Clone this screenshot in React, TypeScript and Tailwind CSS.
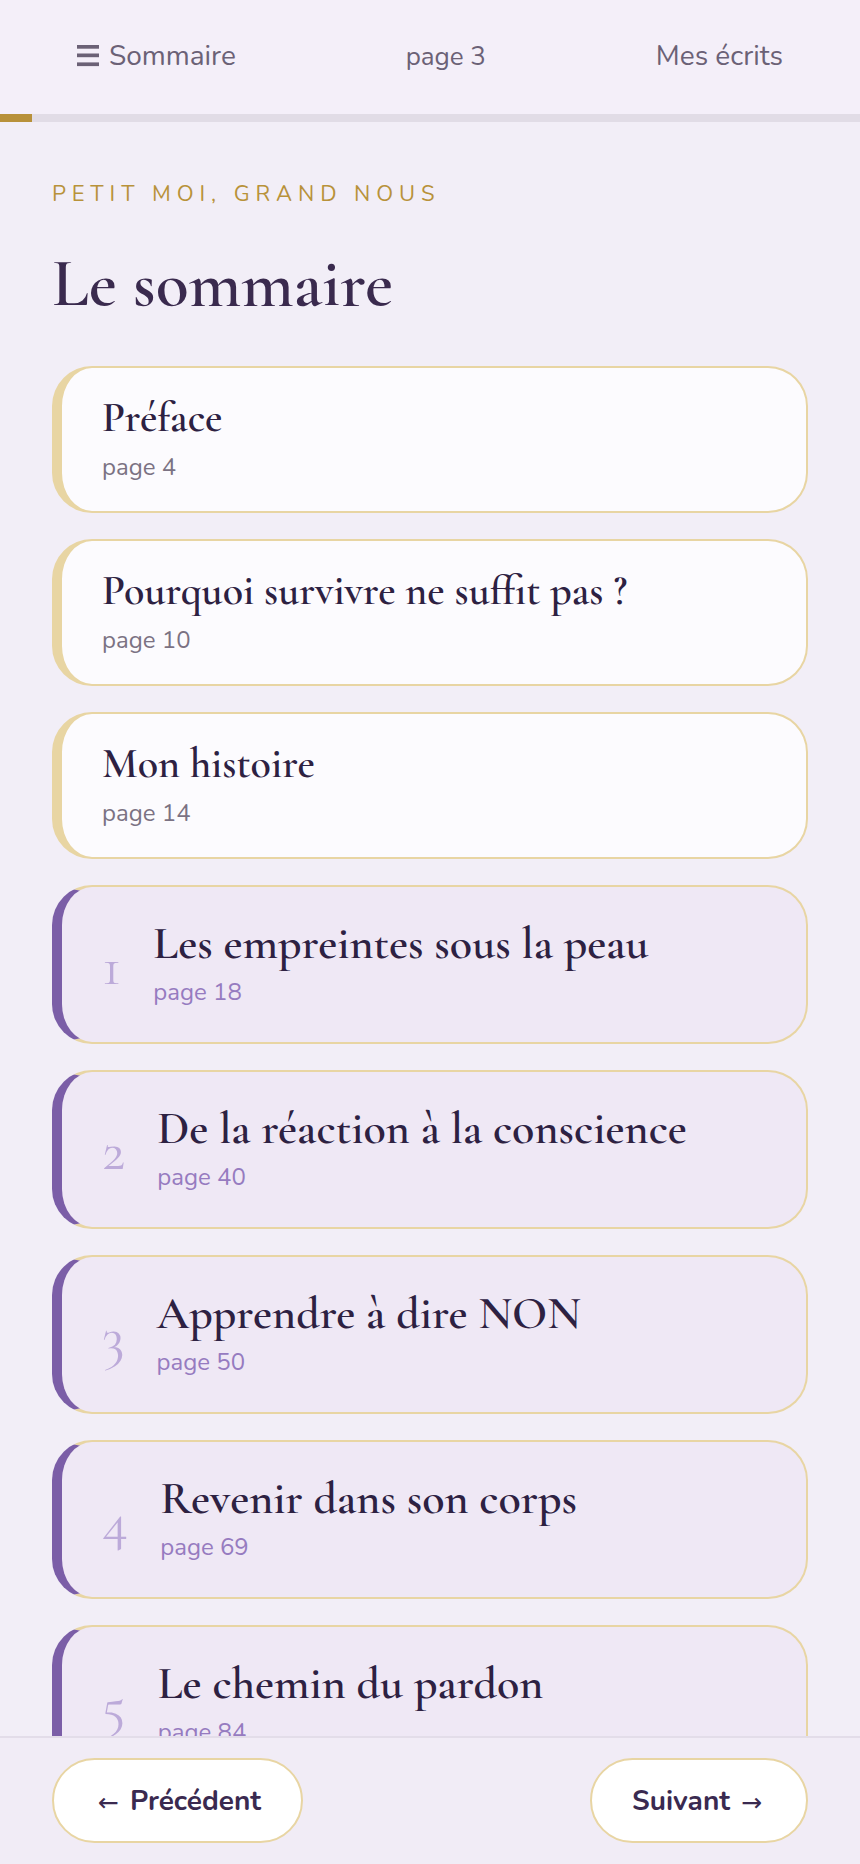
import React from 'react';

const frontMatter = [
    { title: 'Préface', page: 4 },
    { title: 'Pourquoi survivre ne suffit pas\u00a0?', page: 10 },
    { title: 'Mon histoire', page: 14 },
];

const chapters = [
    { num: 1, title: 'Les empreintes sous la peau', page: 18 },
    { num: 2, title: 'De la réaction à la conscience', page: 40 },
    { num: 3, title: 'Apprendre à dire NON', page: 50 },
    { num: 4, title: 'Revenir dans son corps', page: 69 },
    { num: 5, title: 'Le chemin du pardon', page: 84 },
];

function MenuIcon() {
    return (
        <svg width="22" height="22" viewBox="0 0 22 22" fill="currentColor" aria-hidden="true">
            <rect x="0" y="0" width="22" height="3.7" />
            <rect x="0" y="8.5" width="22" height="3.7" />
            <rect x="0" y="17.4" width="22" height="3.7" />
        </svg>
    );
}

export default function App() {
    return (
        <div className="h-screen flex flex-col bg-[#f2eef7] font-[family-name:Nunito,Lato,sans-serif] text-[#2d2142]">
            {/* top bar */}
            <header className="h-[114px] shrink-0 flex items-center justify-between px-[77px] pb-[2px] bg-[#f4eff9] text-[28px] text-[#6b6176]">
                <button className="flex items-center gap-[10px]">
                    <MenuIcon />
                    <span>Sommaire</span>
                </button>
                <span className="text-[26px]">page 3</span>
                <button>Mes écrits</button>
            </header>
            <div className="h-2 shrink-0 bg-[#e1dce6]">
                <div className="h-full w-8 bg-[#b8913a]" />
            </div>

            <main className="flex-1 overflow-hidden px-[52px] pt-[56px]">
                <p className="text-[22px] leading-[33px] tracking-[0.27em] uppercase text-[#b8923a]">
                    Petit moi, grand nous
                </p>
                <h1 className="mt-[38px] mb-[47px] font-[family-name:'Cormorant_Garamond','Liberation_Serif',serif] text-[68px] font-semibold leading-[70px] text-[#3a2a4e]">
                    Le sommaire
                </h1>

                <div className="flex flex-col gap-[26px]">
                    {frontMatter.map((item) => (
                        <div
                            key={item.title}
                            className="rounded-[40px] border-2 border-l-[10px] border-[#e8d5a3] bg-[#fcfbfe] pl-[40px] pr-8 py-[26px]"
                        >
                            <h2 className="font-[family-name:'Cormorant_Garamond','Liberation_Serif',serif] text-[42px] font-semibold leading-[48px] text-[#2d2142]">
                                {item.title}
                            </h2>
                            <p className="mt-[7px] text-[24px] leading-[36px] text-[#7b7283]">page {item.page}</p>
                        </div>
                    ))}

                    {chapters.map((ch) => (
                        <div
                            key={ch.num}
                            className="flex items-center gap-8 rounded-[40px] border-2 border-l-[10px] border-[#e8d5a3] border-l-[#7b5ea7] bg-[#efe8f5] pl-[40px] pr-8 py-[32px]"
                        >
                            <span className="mt-[3px] font-[family-name:'Cormorant_Garamond','Liberation_Serif',serif] text-[58px] leading-none text-[#bcaad9]">
                                {ch.num}
                            </span>
                            <div>
                                <h2 className="font-[family-name:'Cormorant_Garamond','Liberation_Serif',serif] text-[46px] font-semibold leading-[48px] text-[#2d2142]">
                                    {ch.title}
                                </h2>
                                <p className="mt-[7px] text-[24px] leading-[36px] text-[#967bc0]">page {ch.page}</p>
                            </div>
                        </div>
                    ))}
                </div>
            </main>

            {/* bottom navigation */}
            <footer className="shrink-0 flex items-center justify-between border-t-2 border-[#e3dde9] bg-[#f1ecf6] px-[52px] pt-[20px] pb-[21px]">
                <button className="h-[85px] flex items-center gap-[11px] rounded-full border-2 border-[#e8d5a3] bg-white pl-[44px] pr-[40px] text-[28px] font-bold text-[#3a2a50]">
                    <span className="mt-[4px] font-[family-name:'DejaVu_Sans',sans-serif] text-[25px] font-normal">←</span>
                    <span>Précédent</span>
                </button>
                <button className="h-[85px] flex items-center gap-[11px] rounded-full border-2 border-[#e8d5a3] bg-white pl-[40px] pr-[44px] text-[28px] font-bold text-[#3a2a50]">
                    <span>Suivant</span>
                    <span className="mt-[4px] font-[family-name:'DejaVu_Sans',sans-serif] text-[25px] font-normal">→</span>
                </button>
            </footer>
        </div>
    );
}
